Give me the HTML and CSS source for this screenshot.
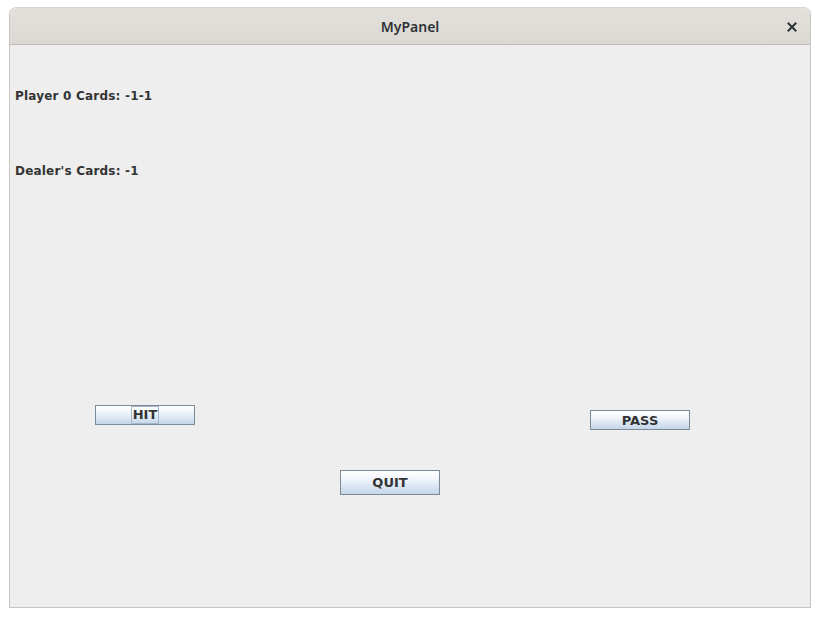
FILE: index.html
```html
<!DOCTYPE html>
<html>
<head>
<meta charset="utf-8">
<link rel="stylesheet" href="styles.css">
</head>
<body>
<div class="window">
  <div class="titlebar">
    <span class="title">MyPanel</span>
    <span class="close">
      <svg width="10" height="10" viewBox="0 0 10 10"><path d="M1.5 1.5 L8.5 8.5 M8.5 1.5 L1.5 8.5" stroke="#2e3436" stroke-width="2" stroke-linecap="square"/></svg>
    </span>
  </div>
  <div class="panel">
    <div class="label label-player">Player 0 Cards: -1-1</div>
    <div class="label label-dealer">Dealer's Cards: -1</div>
    <button class="btn btn-hit"><span class="focus">HIT</span></button>
    <button class="btn btn-pass">PASS</button>
    <button class="btn btn-quit">QUIT</button>
  </div>
</div>
</body>
</html>
```
FILE: styles.css
```css
html, body {
  margin: 0;
  padding: 0;
  background: #ffffff;
}
body {
  padding: 7px 9px 0 9px;
  width: 802px;
}
.window {
  width: 802px;
  height: 601px;
  display: flex;
  flex-direction: column;
  border-radius: 7px 7px 0 0;
  box-sizing: border-box;
  border: 1px solid #c9c6c2;
  border-top-color: #d8d5d1;
  overflow: hidden;
}
.titlebar {
  height: 37px;
  flex: 0 0 37px;
  background: linear-gradient(#e3e0dc, #dcd9d5);
  border-bottom: 1px solid #bfbab4;
  box-sizing: border-box;
  display: flex;
  align-items: center;
  justify-content: center;
  position: relative;
}
.title {
  font-family: "Noto Sans", "DejaVu Sans", sans-serif;
  font-size: 14px;
  font-weight: 600;
  color: #2e3436;
  margin-top: 0;
}
.close {
  position: absolute;
  right: 13px;
  top: 14px;
  width: 10px;
  height: 10px;
  display: flex;
}
.panel {
  flex: 1;
  background: #eeeeee;
  position: relative;
  display: flex;
  flex-direction: column;
  padding: 44px 0 0 5px;
}
.label {
  font-family: "DejaVu Sans", sans-serif;
  font-weight: bold;
  font-size: 12px;
  letter-spacing: 0.2px;
  color: #333333;
  height: 15px;
  line-height: 15px;
}
.label-dealer {
  margin-top: 60px;
}
.btn {
  position: absolute;
  width: 100px;
  height: 20px;
  padding: 0;
  margin: 0;
  box-sizing: border-box;
  border: 1px solid #7a8a99;
  border-radius: 0;
  background: linear-gradient(#ffffff 0%, #f0f5fb 35%, #c5d6e8 100%);
  font-family: "DejaVu Sans", sans-serif;
  font-weight: bold;
  font-size: 13px;
  color: #333333;
  display: flex;
  align-items: center;
  justify-content: center;
}
.btn-hit {
  left: 85px;
  top: 360px;
}
.btn-pass {
  left: 580px;
  top: 365px;
}
.btn-quit {
  left: 330px;
  top: 425px;
  height: 25px;
}
.focus {
  border: 1px solid #a3b8cc;
  padding: 0 1px;
  height: 16px;
  line-height: 16px;
  display: inline-block;
}
```
